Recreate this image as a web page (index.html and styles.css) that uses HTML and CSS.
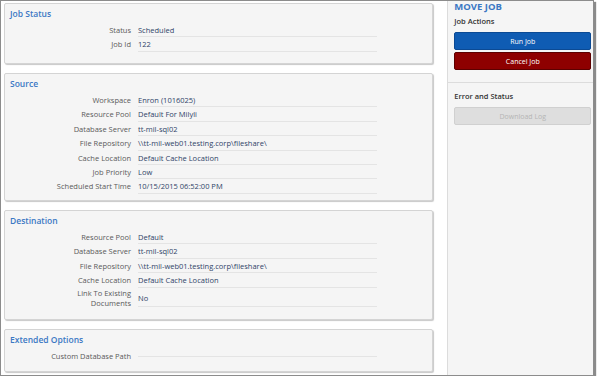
FILE: index.html
```html
<!DOCTYPE html>
<html>
<head>
<meta charset="utf-8">
<link rel="stylesheet" href="styles.css">
</head>
<body>
<div class="frame">
  <div class="main">
    <section class="card card-status">
      <h2 class="card-title">Job Status</h2>
      <div class="row"><div class="label">Status</div><div class="value">Scheduled</div></div>
      <div class="row"><div class="label">Job Id</div><div class="value">122</div></div>
    </section>
    <section class="card card-source">
      <h2 class="card-title">Source</h2>
      <div class="row"><div class="label">Workspace</div><div class="value">Enron (1016025)</div></div>
      <div class="row"><div class="label">Resource Pool</div><div class="value">Default For Milyli</div></div>
      <div class="row"><div class="label">Database Server</div><div class="value">tt-mil-sql02</div></div>
      <div class="row"><div class="label">File Repository</div><div class="value">\\tt-mil-web01.testing.corp\fileshare\</div></div>
      <div class="row"><div class="label">Cache Location</div><div class="value">Default Cache Location</div></div>
      <div class="row"><div class="label">Job Priority</div><div class="value">Low</div></div>
      <div class="row"><div class="label">Scheduled Start Time</div><div class="value">10/15/2015 06:52:00 PM</div></div>
    </section>
    <section class="card card-dest">
      <h2 class="card-title">Destination</h2>
      <div class="row"><div class="label">Resource Pool</div><div class="value">Default</div></div>
      <div class="row"><div class="label">Database Server</div><div class="value">tt-mil-sql02</div></div>
      <div class="row"><div class="label">File Repository</div><div class="value">\\tt-mil-web01.testing.corp\fileshare\</div></div>
      <div class="row"><div class="label">Cache Location</div><div class="value">Default Cache Location</div></div>
      <div class="row row-tall"><div class="label">Link To Existing<br>Documents</div><div class="value">No</div></div>
    </section>
    <section class="card card-ext">
      <h2 class="card-title">Extended Options</h2>
      <div class="row row-empty"><div class="label">Custom Database Path</div><div class="value"></div></div>
    </section>
  </div>
  <aside class="side">
    <div class="side-top">
      <h1 class="side-title">MOVE JOB</h1>
      <h3 class="side-sub">Job Actions</h3>
      <button class="btn btn-run">Run Job</button>
      <button class="btn btn-cancel">Cancel Job</button>
    </div>
    <div class="side-bottom">
      <h3 class="side-sub">Error and Status</h3>
      <button class="btn btn-disabled">Download Log</button>
    </div>
  </aside>
</div>
</body>
</html>
```
FILE: styles.css
```css
* { box-sizing: border-box; }
html, body { margin: 0; padding: 0; background: #fff; }
body { font-family: "Open Sans", "Liberation Sans", sans-serif; }

.frame {
  width: 594px;
  height: 376px;
  border: 1px solid #8c8c8c;
  box-shadow: 2px 2px 1px #8a8a8a;
  display: flex;
  overflow: hidden;
  background: #fff;
}

.main {
  width: 447px;
  padding: 2px 0 0 3px;
  display: flex;
  flex-direction: column;
  gap: 9px;
}

.card {
  width: 429px;
  background: #f5f5f5;
  border: 1px solid #d4d4d4;
  border-radius: 2px;
  box-shadow: 1px 1px 1px #c8c8c8;
  padding: 4px 0 0 5px;
}
.card-status { height: 61px; }
.card-source { height: 128px; }
.card-dest { height: 110px; }
.card-ext { height: 43px; }

.card-title {
  margin: 0 0 3px;
  font-size: 8.5px;
  line-height: 12px;
  font-weight: 600;
  color: #3b78c4;
}

.row {
  display: flex;
  align-items: stretch;
  font-size: 7.5px;
}
.label {
  width: 121px;
  text-align: right;
  color: #5a5a5a;
  padding: 2px 0 0;
  line-height: 11px;
}
.value {
  margin-left: 7px;
  width: 239px;
  color: #2f4468;
  border-bottom: 1px solid #e4e4e4;
  padding: 2px 0 0;
  line-height: 11px;
  height: 14.4px;
}
.row-tall .value { height: 19.7px; padding-top: 5px; }
.row-tall .label { line-height: 10px; padding-top: 0; }
.row-empty .value { height: 8px; }

.side {
  width: 146px;
  border-left: 1px solid #dcdcdc;
  background: #f5f5f5;
  display: flex;
  flex-direction: column;
}
.side-top {
  padding: 0 1px 10px 6px;
  border-bottom: 1px solid #dcdcdc;
}
.side-bottom {
  padding: 6px 1px 0 6px;
}
.side-title {
  margin: 0;
  font-size: 9.5px;
  line-height: 12px;
  font-weight: 700;
  color: #3b78c4;
}
.side-sub {
  margin: 3px 0 6px;
  font-size: 7.5px;
  line-height: 10px;
  font-weight: 600;
  color: #333;
}
.side-bottom .side-sub { margin-top: 2px; }

.btn {
  display: block;
  width: 137px;
  height: 18px;
  border-radius: 2px;
  font-family: inherit;
  font-size: 7px;
  color: #fff;
  padding: 0;
  margin: 0 0 2px;
}
.btn-run { background: #0f5cb3; border: 1px solid #0b4a94; }
.btn-cancel { background: #8e0000; border: 1px solid #5c0000; }
.btn-disabled { background: #dedede; border: 1px solid #d0d0d0; color: #b5b5b5; }
```
